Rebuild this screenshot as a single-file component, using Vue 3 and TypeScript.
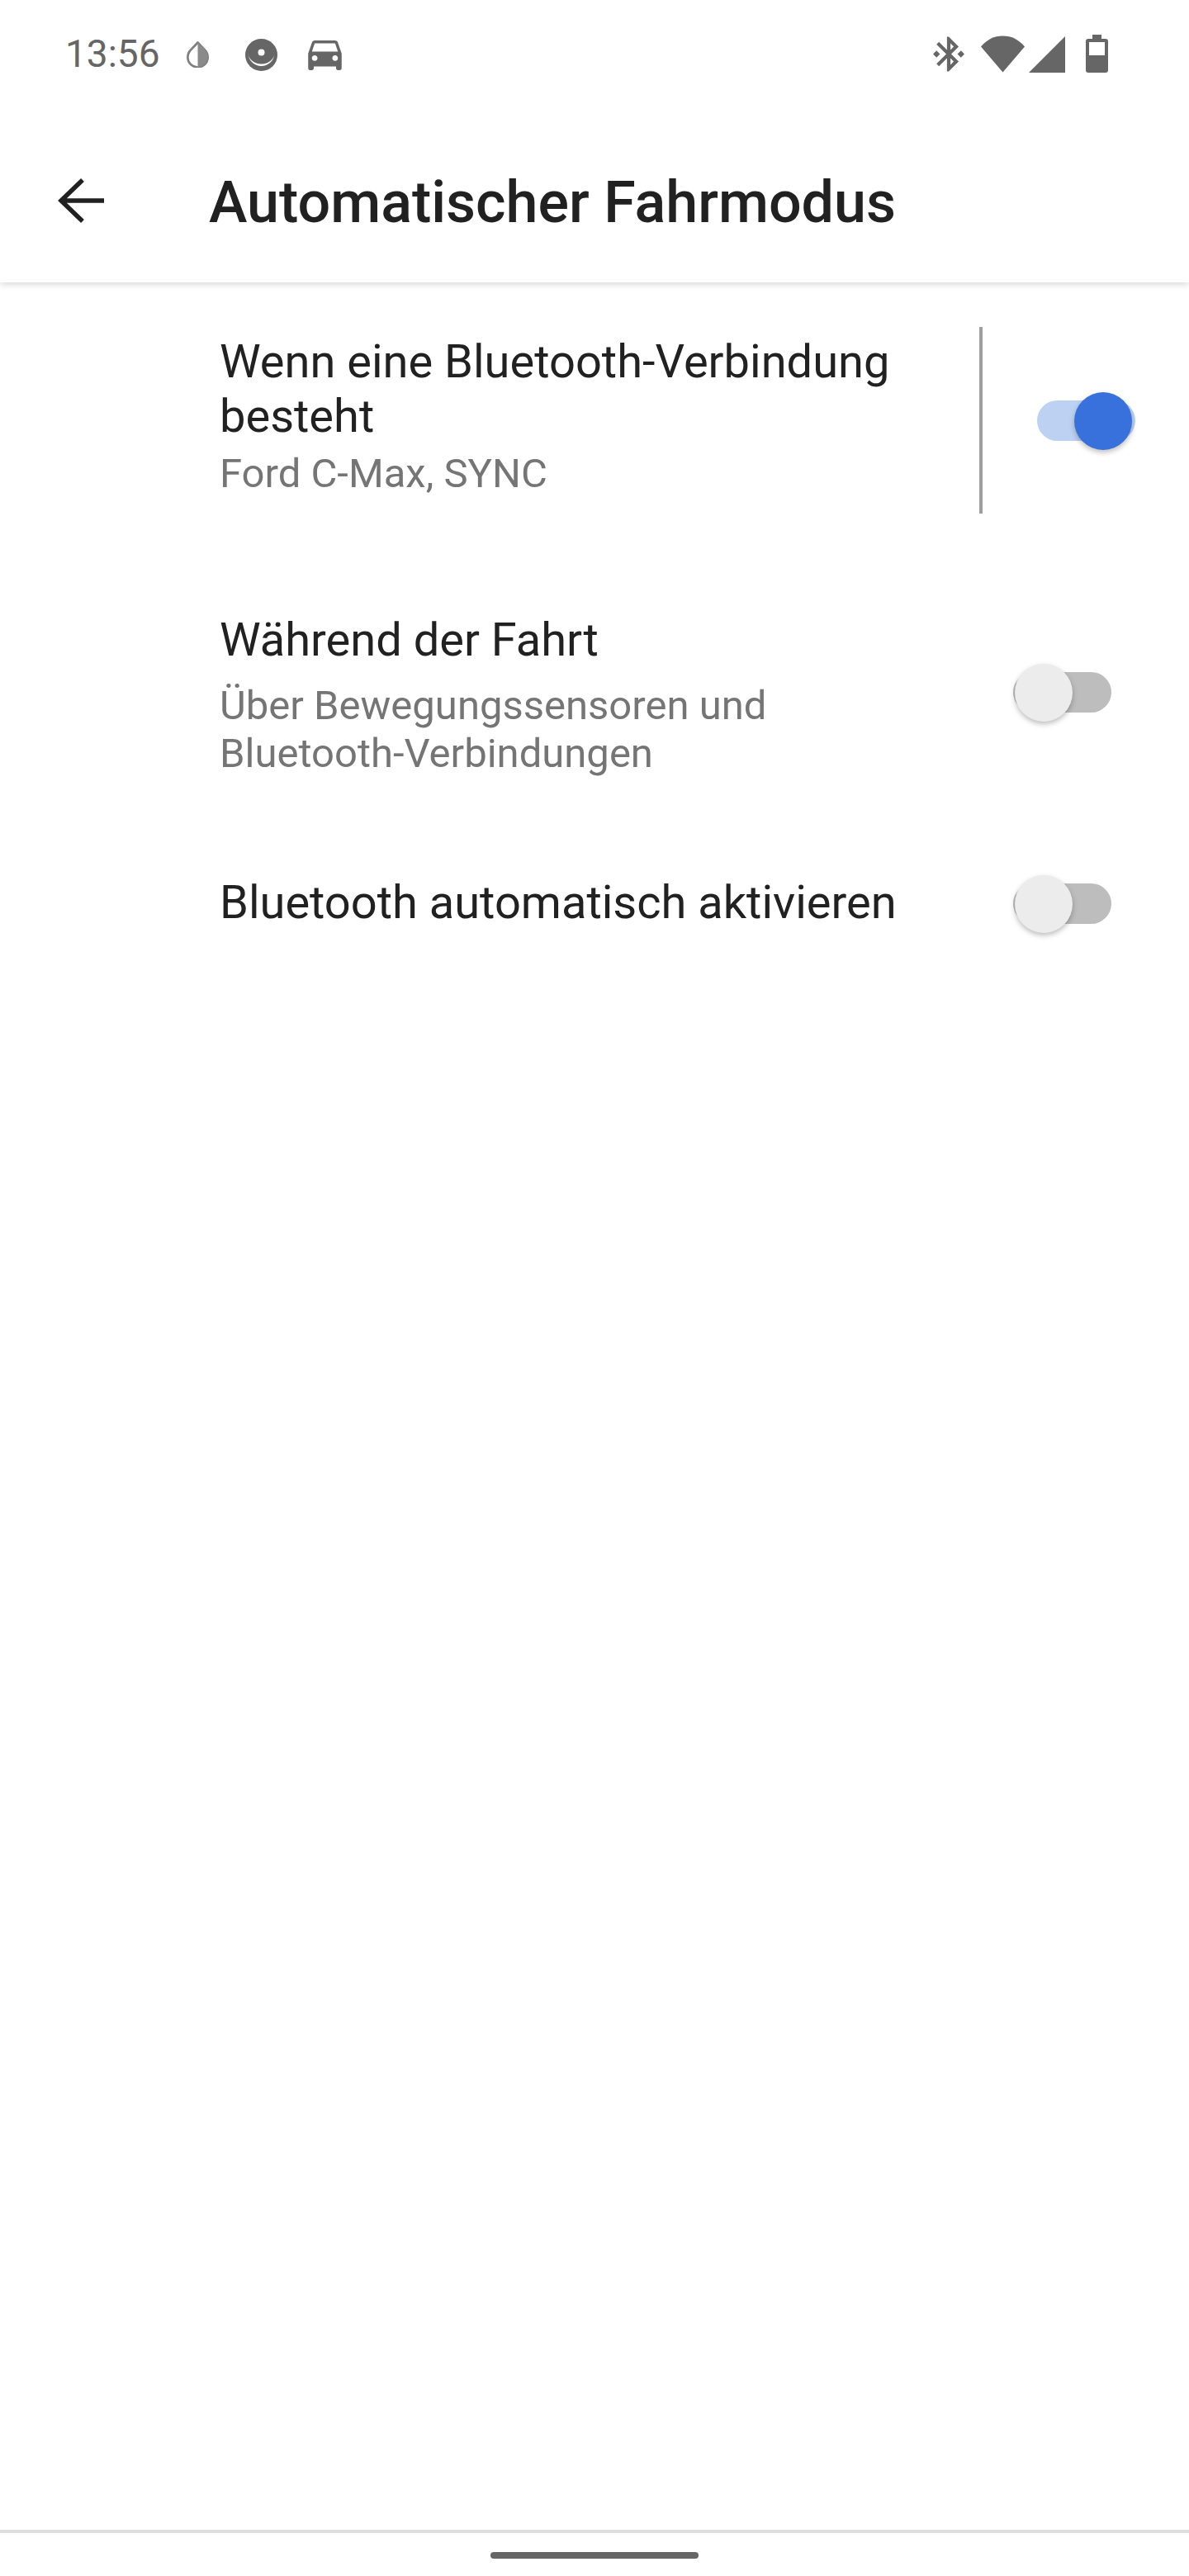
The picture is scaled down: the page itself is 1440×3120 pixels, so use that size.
<script setup lang="ts">
interface Setting {
  title: string
  summary?: string
  on: boolean
  divider?: boolean
}

const settings: Setting[] = [
  { title: 'Wenn eine Bluetooth-Verbindung besteht', summary: 'Ford C-Max, SYNC', on: true, divider: true },
  { title: 'Während der Fahrt', summary: 'Über Bewegungssensoren und Bluetooth-Verbindungen', on: false },
  { title: 'Bluetooth automatisch aktivieren', on: false }
]
</script>

<template>
  <div class="screen">
    <div class="status">
      <span class="clock">13:56</span>
      <svg class="ic-drop" width="27" height="32" viewBox="0 0 27 32">
        <path d="M13.5 1.5 L22.5 11 A12.2 12.2 0 1 1 4.5 11 Z" fill="#fff" stroke="#808080" stroke-width="2.6" stroke-linejoin="round" />
        <path d="M13.5 1.5 L22.5 11 A12.2 12.2 0 0 1 13.5 31 Z" fill="#8a8a8a" />
      </svg>
      <svg class="ic-disc" width="39" height="39" viewBox="0 0 39 39">
        <circle cx="19.5" cy="19.5" r="19.5" fill="#666" />
        <path d="M3.5 17 A16 16 0 0 0 35.5 17 A16 13.5 0 0 1 3.5 17 Z" fill="#fff" />
        <circle cx="19.5" cy="16.5" r="4" fill="#fff" />
      </svg>
      <svg class="ic-car" width="41" height="36" viewBox="3 5 18 16">
        <path fill="#666" d="M18.92 6.01C18.72 5.42 18.16 5 17.5 5h-11c-.66 0-1.21.42-1.42 1.01L3 12v8c0 .55.45 1 1 1h1c.55 0 1-.45 1-1v-1h12v1c0 .55.45 1 1 1h1c.55 0 1-.45 1-1v-8l-2.08-5.99zM6.5 16c-.83 0-1.5-.67-1.5-1.5S5.67 13 6.5 13s1.5.67 1.5 1.5S7.33 16 6.5 16zm11 0c-.83 0-1.5-.67-1.5-1.5s.67-1.5 1.5-1.5 1.5.67 1.5 1.5-.67 1.5-1.5 1.5zM5 11l1.5-4.5h11L19 11H5z" />
      </svg>
      <span class="spacer"></span>
      <svg class="ic-bt" width="38" height="45" viewBox="3 2 18 20">
        <path fill="#666" d="M7 12l-2-2-2 2 2 2 2-2zm10.71-4.29L12 2h-1v7.59L6.41 5 5 6.41 10.59 12 5 17.59 6.41 19 11 14.41V22h1l5.71-5.71-4.3-4.29 4.3-4.29zM13 5.83l1.88 1.88L13 9.59V5.83zm1.88 10.46L13 18.17v-3.76l1.88 1.88zM19 10l-2 2 2 2 2-2-2-2z" />
      </svg>
      <svg class="ic-wifi" width="53" height="45" viewBox="0 0 53 45">
        <path fill="#666" d="M26.5 44.5 L0 13.5 C7 5 16 0.5 26.5 0.5 C37 0.5 46 5 53 13.5 Z" />
      </svg>
      <svg class="ic-signal" width="44" height="44" viewBox="0 0 44 44">
        <path fill="#666" d="M44 0 V44 H0 Z" />
      </svg>
      <svg class="ic-battery" width="27" height="46" viewBox="0 0 27 46">
        <path fill="#666" fill-rule="evenodd" d="M8 0 H19 V5 H24 A3 3 0 0 1 27 8 V43 A3 3 0 0 1 24 46 H3 A3 3 0 0 1 0 43 V8 A3 3 0 0 1 3 5 H8 Z M4 9 V25 H23 V9 Z" />
      </svg>
    </div>

    <div class="toolbar">
      <svg class="back" width="56" height="56" viewBox="0 0 56 56">
        <path d="M56 28 H4 M30 3 L4 28 L30 53" fill="none" stroke="#212121" stroke-width="5.5" />
      </svg>
      <h1 class="title">Automatischer Fahrmodus</h1>
    </div>

    <div class="list">
      <div v-for="item in settings" :key="item.title" class="row" :class="{ 'row-divided': item.divider, 'row-single': !item.summary }">
        <div class="text">
          <div class="row-title">{{ item.title }}</div>
          <div v-if="item.summary" class="row-summary">{{ item.summary }}</div>
        </div>
        <div v-if="item.divider" class="divider"></div>
        <div class="switch" :class="{ on: item.on }">
          <span class="track"></span>
          <span class="thumb"></span>
        </div>
      </div>
    </div>

    <div class="nav">
      <div class="pill"></div>
    </div>
  </div>
</template>

<style scoped>
.screen {
  width: 1440px;
  height: 3120px;
  overflow: hidden;
  display: flex;
  flex-direction: column;
  background: #fff;
  font-family: Roboto, "Liberation Sans", sans-serif;
}

.status {
  height: 130px;
  padding: 0 98px 0 79px;
  display: flex;
  align-items: flex-start;
  box-sizing: border-box;
  color: #666;
}
.clock {
  font-size: 46px;
  line-height: 46px;
  margin-top: 42px;
  width: 147px;
}
.status svg {
  flex: none;
}
.ic-drop { margin-top: 50px; }
.ic-disc { margin-top: 47px; margin-left: 44px; }
.ic-car { margin-top: 49px; margin-left: 37px; }
.spacer { flex: 1; }
.ic-bt { margin-top: 43px; }
.ic-wifi { margin-top: 43px; margin-left: 20px; }
.ic-signal { margin-top: 44px; margin-left: 5px; }
.ic-battery { margin-top: 42px; margin-left: 25px; }

.toolbar {
  height: 212px;
  display: flex;
  align-items: center;
  padding: 0 0 0 70px;
  box-sizing: border-box;
  box-shadow: 0 3px 7px rgba(0, 0, 0, 0.14);
  clip-path: inset(0 0 -20px 0);
}
.back {
  margin-top: 14px;
}
.title {
  margin: 17px 0 0 127px;
  font-size: 70px;
  font-weight: 500;
  color: #212121;
}

.list {
  flex: 1;
  padding-top: 54px;
}
.row {
  display: flex;
  align-items: center;
  padding-left: 266px;
  min-height: 228px;
  box-sizing: border-box;
}
.row-divided {
  min-height: 226px;
  margin-bottom: 102px;
}
.row-single {
  margin-top: 77px;
  min-height: 130px;
}
.text {
  width: 860px;
  margin-top: 8px;
}
.row-single .text {
  margin-top: -2px;
}
.row-title {
  font-size: 56px;
  line-height: 66px;
  color: #212121;
}
.row-summary {
  margin-top: 18px;
  font-size: 49px;
  line-height: 58px;
  color: #757575;
}
.row-divided .text {
  margin-top: -10px;
}
.row-divided .row-summary {
  margin-top: 8px;
}

.divider {
  width: 4px;
  align-self: stretch;
  margin-left: 60px;
  background: #9e9e9e;
}

.switch {
  position: relative;
  width: 119px;
  height: 49px;
  margin-left: 101px;
  flex: none;
}
.switch.on {
  margin-left: 66px;
}
.track {
  position: absolute;
  inset: 0;
  border-radius: 25px;
  background: #bdbdbd;
}
.thumb {
  position: absolute;
  top: -10px;
  left: 2px;
  width: 70px;
  height: 70px;
  border-radius: 50%;
  background: #ececec;
  box-shadow: 0 3px 6px rgba(0, 0, 0, 0.26);
}
.switch.on .track {
  background: #bdd2f3;
}
.switch.on .thumb {
  left: 45px;
  background: #3871dc;
}

.nav {
  height: 56px;
  flex: none;
  border-top: 4px solid #dedede;
  display: flex;
  justify-content: center;
  padding-top: 23px;
  box-sizing: border-box;
}
.pill {
  width: 252px;
  height: 8px;
  border-radius: 4px;
  background: #666;
}
</style>

<style>
html, body {
  margin: 0;
  background: #fff;
}
</style>
